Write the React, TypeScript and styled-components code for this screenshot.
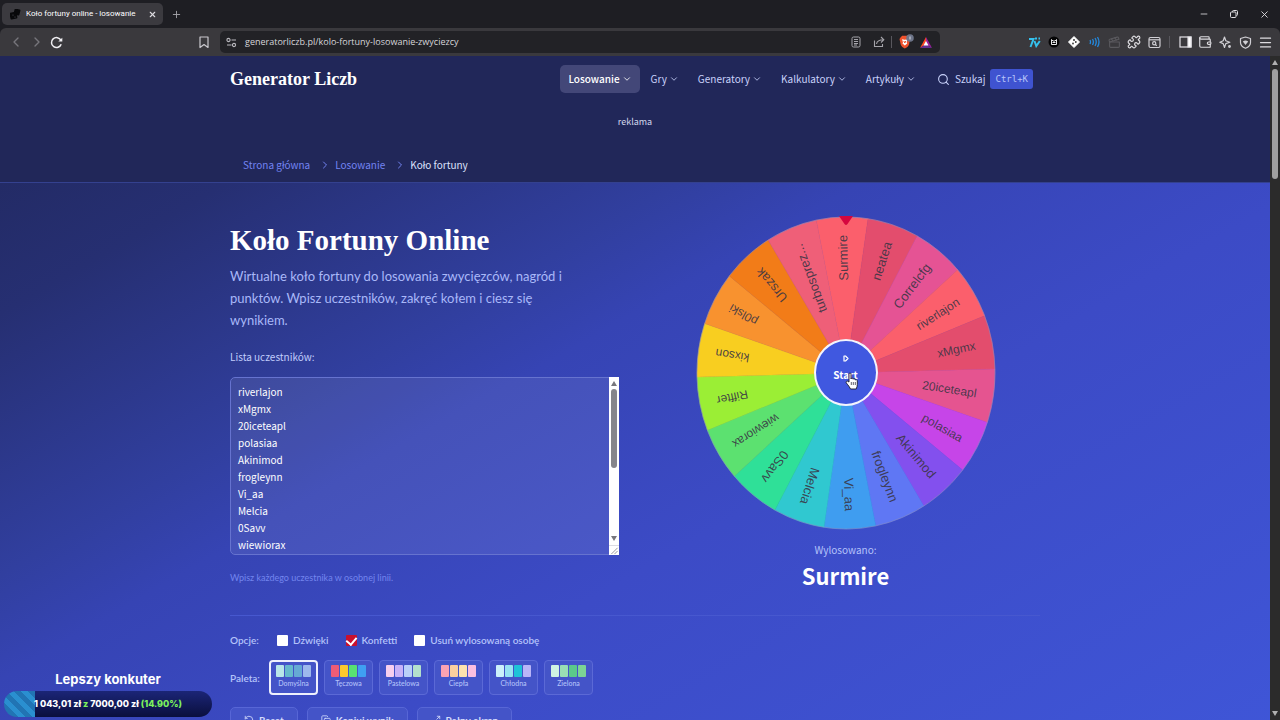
import React from "react";
import styled, { createGlobalStyle, css } from "styled-components";
import {
  ChevronDown,
  ChevronLeft,
  ChevronRight,
  Clapperboard,
  Copy,
  Maximize2,
  Menu,
  Minus,
  Plus,
  Puzzle,
  RotateCcw,
  Search,
  Wallet,
  X,
} from "lucide-react";

const sans = `"Noto Sans CJK SC", "Noto Sans", sans-serif`;
const polish = `Lato, "Noto Sans", sans-serif`;

const GlobalStyle = createGlobalStyle`
  * { box-sizing: border-box; }
  html, body { margin: 0; background: #1e1e23; }
  body { font-family: ${sans}; font-size: 10px; color: #fff; }
  button, input, textarea { font: inherit; color: inherit; margin: 0; }
  button { background: none; border: 0; padding: 0; cursor: pointer; }
  a { color: inherit; text-decoration: none; }
  h1, p, ol { margin: 0; padding: 0; }
  svg { display: block; flex: none; }
`;

const Window = styled.div`
  position: relative;
  display: flex;
  flex-direction: column;
  height: 100vh;
  overflow: hidden;
`;

/* Browser chrome */

const TabBar = styled.div`
  flex: none;
  height: 28px;
  display: flex;
  align-items: center;
  padding: 0 10px 0 2px;
  background: #1e1e23;
`;

const Tab = styled.div`
  width: 161px;
  height: 22px;
  display: flex;
  align-items: center;
  gap: 5px;
  padding: 0 6px 0 8px;
  border-radius: 5px;
  background: #3b3a3f;
  font-family: Roboto, sans-serif;
  font-size: 8px;
  line-height: 22px;
`;

const TabTitle = styled.span`
  flex: 1;
  min-width: 0;
  overflow: hidden;
  white-space: nowrap;
`;

const ChromeButton = styled.button<{ $dim?: boolean }>`
  display: flex;
  align-items: center;
  justify-content: center;
  color: ${(p) => (p.$dim ? "#77767c" : "#dddce0")};
`;

const NewTab = styled(ChromeButton)`
  margin-left: 8px;
  color: #a5a4aa;
`;

const WindowButtons = styled.div`
  display: flex;
  gap: 20px;
  margin-left: auto;
`;

const Toolbar = styled.div`
  flex: none;
  height: 28px;
  display: flex;
  align-items: center;
  padding: 0 5px 0 8px;
  background: #3a393d;
  border-top-left-radius: 6px;
  border-top-right-radius: 6px;
`;

const NavButtons = styled.div`
  display: flex;
  align-items: center;
  gap: 5px;
  width: 191px;
`;

const Address = styled.div`
  width: 720px;
  min-width: 0;
  height: 22px;
  margin-left: 11px;
  display: flex;
  align-items: center;
  gap: 6px;
  padding: 0 8px 0 6px;
  border-radius: 5px;
  background: #222226;
`;

const Url = styled.span`
  flex: 1;
  margin-left: 2px;
  font-family: "Open Sans", sans-serif;
  font-size: 9px;
  line-height: 22px;
  color: #d6d5da;
`;

const PageTools = styled.div`
  display: flex;
  gap: 12px;
`;

const Divider = styled.i`
  width: 1px;
  height: 12px;
  background: #58575d;
`;

const Extensions = styled.div`
  display: flex;
  align-items: center;
  margin-left: auto;
  ${ChromeButton} {
    width: 20px;
  }
  ${Divider} {
    margin: 0 5px;
  }
`;

/* Page */

const Viewport = styled.div`
  flex: 1;
  min-height: 0;
  display: flex;
`;

const Page = styled.div`
  flex: 1;
  min-width: 0;
  overflow: hidden;
  display: flex;
  flex-direction: column;
`;

const ScrollTrack = styled.div`
  width: 10px;
  display: flex;
  flex-direction: column;
  align-items: center;
  padding: 4px 0;
  background: #2b2b2b;
`;

const ScrollThumb = styled.i`
  width: 6px;
  height: 110px;
  margin: 4px 0 auto;
  border-radius: 3px;
  background: #9f9f9f;
`;

const Container = styled.div`
  width: 100%;
  max-width: 810px;
  margin: 0 auto;
`;

const Header = styled.header`
  flex: none;
  background: #212759;
  border-bottom: 1px solid #34418f;
`;

const TopRow = styled(Container)`
  display: flex;
  align-items: center;
  padding: 9px 7px 0 0;
`;

const Brand = styled.a`
  margin-right: auto;
  font-family: "Liberation Serif", serif;
  font-weight: 700;
  font-size: 18px;
  line-height: 28px;
`;

const Nav = styled.nav`
  display: flex;
  gap: 3px;
`;

const NavItem = styled.button<{ $active?: boolean }>`
  display: flex;
  align-items: center;
  gap: 2px;
  height: 28px;
  padding: 0 8px;
  border-radius: 5px;
  line-height: 16px;
  color: #c9d2fb;
  ${(p) =>
    p.$active &&
    css`
      background: #434778;
      color: #fff;
      font-weight: 500;
    `}
`;

const SearchButton = styled(NavItem)`
  gap: 5px;
  padding: 0;
  margin-left: 13px;
`;

const Kbd = styled.kbd`
  padding: 0 5px;
  border-radius: 3px;
  background: #3f53d0;
  font-family: "DejaVu Sans Mono", monospace;
  font-size: 9px;
  line-height: 20px;
  color: #b8c5fa;
`;

const Advert = styled(Container)`
  padding: 20px 0 26px;
  text-align: center;
  font-size: 9px;
  line-height: 18px;
  color: #d3d8ee;
`;

const Crumbs = styled.ol`
  max-width: 810px;
  height: 25px;
  margin: 0 auto;
  padding: 0 13px;
  display: flex;
  align-items: flex-start;
  list-style: none;
  line-height: 16px;
  color: #7384f2;
`;

const Crumb = styled.li<{ $current?: boolean }>`
  display: flex;
  align-items: center;
  gap: 4px;
  margin-right: 9px;
  ${(p) =>
    p.$current &&
    css`
      color: #dbe1fc;
    `}
`;

const Hero = styled.main`
  flex: 1 0 auto;
  padding-top: 33px;
  background: linear-gradient(
    150deg,
    #232b66 0%,
    #262f72 10%,
    #313f9f 30%,
    #3644b4 38%,
    #3c4bc6 58%,
    #3f56d8 100%
  );
`;

const Columns = styled(Container)`
  display: grid;
  grid-template-columns: 1fr 1fr;
  gap: 32px;
  min-height: 399px;
`;

const Column = styled.div`
  display: flex;
  flex-direction: column;
`;

const Title = styled.h1`
  margin-top: 6px;
  font-family: "Liberation Serif", serif;
  font-weight: 700;
  font-size: 29px;
  line-height: 36px;
`;

const Lead = styled.p`
  max-width: 350px;
  margin-top: 7px;
  font-family: ${polish};
  font-size: 13px;
  line-height: 22px;
  color: #a9b8f9;
`;

const FieldLabel = styled.label`
  margin-top: 18px;
  line-height: 16px;
  color: #c0ccfb;
`;

const ListBox = styled.div`
  position: relative;
  height: 178px;
  margin-top: 12px;
`;

const NameList = styled.textarea`
  display: block;
  width: 100%;
  height: 100%;
  padding: 5px 16px 5px 7px;
  border: 1px solid #6673cf;
  border-radius: 5px;
  background: rgba(255, 255, 255, 0.08);
  outline: none;
  resize: none;
  line-height: 17px;
  overflow-y: scroll;
  scrollbar-width: none;
`;

const ListScroll = styled.div`
  position: absolute;
  top: 0;
  right: 0;
  bottom: 0;
  width: 10px;
  display: flex;
  flex-direction: column;
  align-items: center;
  padding-top: 4px;
  background: #fff;
  pointer-events: none;
`;

const ListThumb = styled.i`
  width: 6px;
  height: 79px;
  margin: 3px 0 auto;
  border-radius: 3px;
  background: #85858b;
`;

const Grip = styled.svg`
  margin-top: 4px;
  border-top: 1px solid #dcdce4;
`;

const Hint = styled.p`
  margin-top: 15px;
  font-family: ${polish};
  font-size: 9px;
  line-height: 16px;
  color: #7385ee;
`;

const WheelBox = styled.div`
  position: relative;
  width: 300px;
  height: 314px;
  margin: 0 auto;
`;

const StartButton = styled.button`
  position: absolute;
  inset: 123px 118px 124px;
  display: flex;
  flex-direction: column;
  align-items: center;
  padding-top: 14px;
  border: 2px solid #f3f4fd;
  border-radius: 50%;
  background: #4058e0;
  font-weight: 700;
  line-height: 16px;
  gap: 5px;
`;

const Cursor = styled.svg`
  position: absolute;
  left: 149px;
  top: 156px;
`;

const ResultLabel = styled.p`
  margin-top: 12px;
  text-align: center;
  line-height: 16px;
  color: #b4c2fa;
`;

const Result = styled.output`
  text-align: center;
  font-weight: 700;
  font-size: 22px;
  line-height: 34px;
`;

const Settings = styled(Container)`
  border-top: 1px solid #4758cf;
  padding: 16px 0 24px;
  font-family: ${polish};
  font-weight: 600;
  line-height: 16px;
  color: #b4c2fa;
`;

const OptionRow = styled.div`
  display: flex;
  align-items: center;
`;

const OptionLabel = styled.span`
  width: 30px;
`;

const Check = styled.label`
  display: flex;
  align-items: center;
  gap: 5px;
  margin-left: 17px;
`;

const Box = styled.input`
  appearance: none;
  width: 11px;
  height: 11px;
  border-radius: 1px;
  background: #fff;
  display: grid;
  place-items: center;
  &:checked { background: #c8102e; }
  &:checked::before {
    content: "";
    width: 5px;
    height: 8px;
    margin-bottom: 2px;
    border: solid #fff;
    border-width: 0 2px 2px 0;
    transform: rotate(40deg);
  }
`;

const PaletteRow = styled(OptionRow)`
  gap: 6px;
  margin-top: 12px;
`;

const PaletteLabel = styled.span`
  width: 33px;
`;

const PaletteButton = styled.button<{ $selected?: boolean }>`
  width: 49px;
  height: 35px;
  padding-bottom: 2px;
  display: flex;
  flex-direction: column;
  align-items: center;
  justify-content: center;
  gap: 1px;
  border: ${(p) => (p.$selected ? "2px solid #eef0fd" : "1px solid #5b69d6")};
  border-radius: 4px;
  background: #4454c8;
  font-size: 7px;
  font-weight: 500;
  line-height: 10px;
`;

const Swatches = styled.span`
  display: flex;
  gap: 1px;
`;

const Swatch = styled.i<{ $color: string }>`
  width: 8px;
  height: 12px;
  border-radius: 1px;
  background: ${(p) => p.$color};
`;

const Actions = styled.div`
  display: flex;
  gap: 9px;
  margin-top: 12px;
`;

const ActionButton = styled.button`
  display: flex;
  align-items: center;
  gap: 5px;
  height: 26px;
  padding: 0 13px;
  border: 1px solid #5766d6;
  border-radius: 5px;
  background: #4454c8;
  font-weight: 700;
  color: #d5dcfc;
`;

/* Stream overlay with the donation goal */

const Goal = styled.aside`
  position: absolute;
  left: 4px;
  bottom: 3px;
  width: 208px;
  font-family: Inter, sans-serif;
  font-weight: 800;
  text-align: center;
`;

const GoalTitle = styled.p`
  margin-bottom: 3px;
  font-weight: 700;
  font-size: 13px;
  line-height: 18px;
`;

const GoalBar = styled.div`
  height: 26px;
  border-radius: 13px;
  overflow: hidden;
  background:
    repeating-linear-gradient(45deg, #2a8fd0 0 5px, #2174b4 5px 10px) no-repeat left / 31px 100%,
    linear-gradient(#1b2577, #0a0f3d);
  font-size: 9px;
  line-height: 25px;
`;

const Green = styled.span`
  color: #7df25c;
`;

const names = [
  ["Surmire", "#fb5f6c"],
  ["neatea", "#e34d6d"],
  ["Correlcfg", "#e55394"],
  ["riverlajon", "#fb5f6c"],
  ["xMgmx", "#e34d6d"],
  ["20iceteapl", "#e55490"],
  ["polasiaa", "#c645e8"],
  ["Akinimod", "#8350ee"],
  ["frogleynn", "#5f77f4"],
  ["Vi_aa", "#3f9df0"],
  ["Melcia", "#30c8d0"],
  ["0Savv", "#2fe098"],
  ["wiewiorax", "#5ce170"],
  ["Riffter", "#9bee35"],
  ["kixson", "#f8ce20"],
  ["p0lski", "#f8922f"],
  ["Urszak", "#f27c18"],
  ["turbosprez...", "#ef5f78"],
];

const entrants = [...names.slice(3), ...names.slice(0, 3)].map(([name]) => name).join("\n");

const CX = 150;
const CY = 157;
const RX = 149;
const RY = 156;
const SLICE = 20;
const START = -1.5;

function onWheel(deg: number, scale: number) {
  const a = (deg * Math.PI) / 180;
  return [CX + Math.sin(a) * RX * scale, CY - Math.cos(a) * RY * scale];
}

function Wheel() {
  return (
    <svg width="300" height="314" viewBox="0 0 300 314" role="img" aria-label="Koło fortuny">
      {names.map(([name, color], i) => {
        const mid = i * SLICE + START;
        const [x1, y1] = onWheel(mid - SLICE / 2, 1);
        const [x2, y2] = onWheel(mid + SLICE / 2, 1);
        return (
          <path
            key={name}
            fill={color}
            stroke={color}
            strokeWidth="0.400"
            d={`M${CX} ${CY}L${x1} ${y1}A${RX} ${RY} 0 0 1 ${x2} ${y2}Z`}
          />
        );
      })}
      <ellipse cx={CX} cy={CY} rx={RX} ry={RY} fill="none" stroke="#8f93c0" strokeOpacity="0.5" />
      {names.map(([name], i) => {
        const [x, y] = onWheel(i * SLICE + START, 0.885);
        const angle = (Math.atan2(y - CY, x - CX) * 180) / Math.PI;
        const steep = Math.abs(y - CY) > Math.abs(x - CX);
        return (
          <text
            key={name}
            x={x}
            y={y}
            transform={`rotate(${angle} ${x} ${y})`}
            textAnchor="end"
            dominantBaseline="central"
            fontFamily="Liberation Sans, sans-serif"
            fontSize={steep ? 13 : 12}
            fill="#3a3545"
            fillOpacity="0.9"
          >
            {name}
          </text>
        );
      })}
      <path d="M143 0H157L151.500 8Q150 10 148.500 8Z" fill="#d6063f" />
    </svg>
  );
}

const palettes: [string, string[]][] = [
  ["Domyślna", ["#b8e6e8", "#66b9cc", "#66a9d4", "#9db8ec"]],
  ["Tęczowa", ["#ee5c76", "#fcc82d", "#58e272", "#3f9ff2"]],
  ["Pastelowa", ["#f7cfee", "#c7b2f8", "#b9cff8", "#b3e0cc"]],
  ["Ciepła", ["#fba3b2", "#fbcf9f", "#fde2ae", "#fbbfe0"]],
  ["Chłodna", ["#ccf1fa", "#97e3f2", "#1ec3d8", "#b9b5f8"]],
  ["Zielona", ["#cff4e2", "#99deb4", "#5bc98a", "#7cd495"]],
];

function Dice() {
  return (
    <svg width="11" height="11" viewBox="0 0 11 11" fill="#08080a">
      <rect x="4" y="0" width="6" height="6" rx="1" transform="rotate(15 7 3)" />
      <rect x="0" y="3" width="7" height="7" rx="1" transform="rotate(-12 4 7)" />
      <circle cx="3" cy="6" r="0.600" fill="#55555a" />
      <circle cx="5" cy="8" r="0.600" fill="#55555a" />
    </svg>
  );
}

function ReloadIcon() {
  return (
    <svg width="13" height="13" viewBox="0 0 13 13" fill="none" stroke="#f0eff3" strokeWidth="1.500">
      <path d="M11.200 8.300A5 5 0 1 1 10.900 4.200" />
      <path d="M8.300 5.600H12.300V1.800Z" fill="#f0eff3" stroke="none" />
    </svg>
  );
}

function SiteInfo() {
  return (
    <svg width="11" height="11" viewBox="0 0 11 11" fill="none" stroke="#b9b8be" strokeWidth="1.100">
      <circle cx="2.500" cy="3" r="1.600" />
      <path d="M5.500 3H10M1 8H5.500" />
      <circle cx="8" cy="8" r="1.600" />
    </svg>
  );
}

function ReaderIcon() {
  return (
    <svg width="10" height="12" viewBox="0 0 10 12" fill="none" stroke="#a5a4aa">
      <rect x="1" y="1" width="8" height="10" rx="1.500" />
      <path d="M3 3.500H7M3 5.500H7M3 7.500H7M3 9H6" />
    </svg>
  );
}

function ShareArrow() {
  return (
    <svg width="12" height="12" viewBox="0 0 12 12" fill="none" stroke="#a5a4aa" strokeWidth="1.100">
      <path d="M1.500 4.500V10.500H9.500V8" />
      <path d="M3.500 8C4 5 6 3.800 10.500 3.800M8 1L10.800 3.800L8 6.500" />
    </svg>
  );
}

function BraveShield() {
  return (
    <svg width="16" height="16" viewBox="0 0 16 16">
      <path d="M2.500 3.500L4.200 1.800H9.200L11 3.500L12 5L11 10.500C10.500 12.500 8.500 13.500 6.800 14.600C5.200 13.500 3.200 12.500 2.700 10.500L1.500 5Z" fill="#f0522c" />
      <path d="M4 5.200L6.800 5.800L9.600 5.200L8.700 8.300L9.200 9.600L6.800 11.600L4.500 9.600L5 8.300Z" fill="#fff" />
      <path d="M5.800 7L6.800 9L7.800 7" fill="none" stroke="#f0522c" />
      <circle cx="12" cy="4" r="3.800" fill="#6d7488" />
      <path d="M12 2.500V5.500" stroke="#d9dce6" />
    </svg>
  );
}

function BatTriangle() {
  return (
    <svg width="12" height="11" viewBox="0 0 12 11">
      <path d="M6 0L0 11L6 7Z" fill="#ff4724" />
      <path d="M6 0L12 11L6 7Z" fill="#9e1f9a" />
      <path d="M0 11H12L6 7Z" fill="#662d91" />
      <path d="M6 4L3.500 8.500H8.500Z" fill="#fff" />
    </svg>
  );
}

function SevenTv() {
  return (
    <svg width="13" height="11" viewBox="0 0 13 11" fill="none" stroke="#35c1ec" strokeWidth="2">
      <path d="M1 2H5.500L2.500 10" />
      <path d="M6.500 4L8.300 9L11.800 4M7 1.500H9M10.500 1.500H12" />
    </svg>
  );
}

function CatBadge() {
  return (
    <svg width="12" height="12" viewBox="0 0 12 12">
      <circle cx="6" cy="6" r="5.500" fill="#050506" />
      <path d="M3.500 8.500V3.500L5 5H7L8.500 3.500V8.500Z" fill="none" stroke="#e8e8ea" />
      <path d="M4.500 6.500H7.500" stroke="#e8e8ea" />
    </svg>
  );
}

function DiamondIcon() {
  return (
    <svg width="12" height="12" viewBox="0 0 12 12">
      <path d="M6 0.500L11.500 6L6 11.500L0.500 6Z" fill="#fff" stroke="#fff" strokeLinejoin="round" />
      <circle cx="6" cy="4" r="1" fill="#333" />
      <circle cx="7.800" cy="6" r="0.900" fill="#333" />
      <circle cx="5" cy="7.500" r="0.900" fill="#333" />
    </svg>
  );
}

function SoundWaves() {
  return (
    <svg width="12" height="12" viewBox="0 0 12 12" fill="none" stroke="#2388dd" strokeWidth="1.300">
      <path d="M2 4Q3 6 2 8M4.500 3Q6.300 6 4.500 9M7 2Q9.500 6 7 10M9.500 1Q12.500 6 9.500 11" />
    </svg>
  );
}

function TabSearch() {
  return (
    <svg width="13" height="13" viewBox="0 0 13 13" fill="none" stroke="#d0cfd4" strokeWidth="1.200">
      <rect x="1" y="1.500" width="11" height="10" rx="1.500" />
      <path d="M1 3.800H12" />
      <circle cx="6.200" cy="7.300" r="1.600" />
      <path d="M7.400 8.500L8.800 9.800" />
    </svg>
  );
}

function SparkIcon() {
  return (
    <svg width="13" height="13" viewBox="0 0 13 13" fill="none" stroke="#d0cfd4" strokeWidth="1.200" strokeLinejoin="round">
      <path d="M5.500 1L6.800 4.800L10.800 6.200L6.800 7.600L5.500 11.500L4.200 7.600L0.800 6.200L4.200 4.800Z" />
      <circle cx="10.500" cy="10.500" r="1.400" fill="#d0cfd4" stroke="none" />
    </svg>
  );
}

function VpnShield() {
  return (
    <svg width="13" height="13" viewBox="0 0 13 13" fill="none" stroke="#d0cfd4" strokeWidth="1.200" strokeLinejoin="round">
      <path d="M6.500 1L11.500 2.500V6.500C11.500 9.500 9 11.300 6.500 12.300C4 11.300 1.500 9.500 1.500 6.500V2.500Z" />
      <path d="M3.800 5.500Q6.500 3.500 9.200 5.500L6.500 9Z" fill="#d0cfd4" stroke="none" />
    </svg>
  );
}

function SidePanel() {
  return (
    <svg width="13" height="12" viewBox="0 0 13 12" fill="none" stroke="#e4e3e8" strokeWidth="1.200">
      <rect x="1" y="1" width="11" height="10" />
      <path d="M9 1H12V11H9Z" fill="#fff" />
    </svg>
  );
}

function ArrowUp({ fill }: { fill: string }) {
  return (
    <svg width="6" height="5" viewBox="0 0 6 5" fill={fill}>
      <path d="M0 5L3 0L6 5Z" />
    </svg>
  );
}

function ArrowDown({ fill }: { fill: string }) {
  return (
    <svg width="6" height="5" viewBox="0 0 6 5" fill={fill}>
      <path d="M0 0L3 5L6 0Z" />
    </svg>
  );
}

export default function App() {
  return (
    <Window>
      <GlobalStyle />
      <TabBar>
        <Tab>
          <Dice />
          <TabTitle>Koło fortuny online - losowanie</TabTitle>
          <ChromeButton aria-label="Zamknij kartę"><X size={9} strokeWidth={3} /></ChromeButton>
        </Tab>
        <NewTab aria-label="Nowa karta"><Plus size={11} /></NewTab>
        <WindowButtons>
          <ChromeButton aria-label="Minimalizuj"><Minus size={10} /></ChromeButton>
          <ChromeButton aria-label="Przywróć">
            <svg width="10" height="10" viewBox="0 0 10 10" fill="none" stroke="currentColor">
              <rect x="1.500" y="3" width="5.500" height="5.500" rx="1" />
              <path d="M3.500 3V2.500Q3.500 1.500 4.500 1.500H7.500Q8.500 1.500 8.500 2.500V5.500Q8.500 6.500 7.500 6.500" />
            </svg>
          </ChromeButton>
          <ChromeButton aria-label="Zamknij"><X size={11} /></ChromeButton>
        </WindowButtons>
      </TabBar>
      <Toolbar>
        <NavButtons>
          <ChromeButton $dim aria-label="Wstecz"><ChevronLeft size={16} strokeWidth={2} /></ChromeButton>
          <ChromeButton $dim aria-label="Dalej"><ChevronRight size={16} strokeWidth={2} /></ChromeButton>
          <ChromeButton aria-label="Odśwież"><ReloadIcon /></ChromeButton>
        </NavButtons>
        <ChromeButton aria-label="Dodaj zakładkę">
          <svg width="10" height="13" viewBox="0 0 10 13" fill="none" stroke="#c9c8ce" strokeWidth="1.200">
            <path d="M1 1H9V11.500L5 8.500L1 11.500Z" strokeLinejoin="round" />
          </svg>
        </ChromeButton>
        <Address>
          <SiteInfo />
          <Url>generatorliczb.pl/kolo-fortuny-losowanie-zwyciezcy</Url>
          <PageTools>
            <ReaderIcon />
            <ShareArrow />
          </PageTools>
          <Divider />
          <BraveShield />
          <BatTriangle />
        </Address>
        <Extensions>
          <ChromeButton aria-label="7TV"><SevenTv /></ChromeButton>
          <ChromeButton aria-label="Kot"><CatBadge /></ChromeButton>
          <ChromeButton aria-label="Kości"><DiamondIcon /></ChromeButton>
          <ChromeButton aria-label="Dźwięk"><SoundWaves /></ChromeButton>
          <ChromeButton aria-label="Wideo"><Clapperboard size={13} color="#5a595e" /></ChromeButton>
          <ChromeButton aria-label="Rozszerzenia"><Puzzle size={14} /></ChromeButton>
          <ChromeButton aria-label="Szukaj kart"><TabSearch /></ChromeButton>
          <Divider />
          <ChromeButton aria-label="Panel boczny"><SidePanel /></ChromeButton>
          <ChromeButton aria-label="Portfel"><Wallet size={14} /></ChromeButton>
          <ChromeButton aria-label="Asystent"><SparkIcon /></ChromeButton>
          <ChromeButton aria-label="VPN"><VpnShield /></ChromeButton>
          <ChromeButton aria-label="Menu"><Menu size={15} /></ChromeButton>
        </Extensions>
      </Toolbar>

      <Viewport>
        <Page>
          <Header>
            <TopRow>
              <Brand href="#">Generator Liczb</Brand>
              <Nav>
                <NavItem $active>Losowanie <ChevronDown size={10} /></NavItem>
                <NavItem>Gry <ChevronDown size={10} /></NavItem>
                <NavItem>Generatory <ChevronDown size={10} /></NavItem>
                <NavItem>Kalkulatory <ChevronDown size={10} /></NavItem>
                <NavItem>Artykuły <ChevronDown size={10} /></NavItem>
              </Nav>
              <SearchButton>
                <Search size={13} />
                Szukaj
                <Kbd>Ctrl+K</Kbd>
              </SearchButton>
            </TopRow>
            <Advert>reklama</Advert>
            <Crumbs>
              <Crumb><a href="#">Strona główna</a></Crumb>
              <Crumb><ChevronRight size={12} /><a href="#">Losowanie</a></Crumb>
              <Crumb $current><ChevronRight size={12} color="#7384f2" />Koło fortuny</Crumb>
            </Crumbs>
          </Header>

          <Hero>
            <Columns>
              <Column>
                <Title>Koło Fortuny Online</Title>
                <Lead>
                  Wirtualne koło fortuny do losowania zwycięzców, nagród i punktów. Wpisz uczestników, zakręć kołem i
                  ciesz się wynikiem.
                </Lead>
                <FieldLabel htmlFor="names">Lista uczestników:</FieldLabel>
                <ListBox>
                  <NameList id="names" defaultValue={entrants} spellCheck={false} />
                  <ListScroll>
                    <ArrowUp fill="#77777d" />
                    <ListThumb />
                    <ArrowDown fill="#77777d" />
                    <Grip width="10" height="10" viewBox="0 0 10 10" stroke="#8d8d95">
                      <path d="M2 9L9 2M5.500 9L9 5.500" />
                    </Grip>
                  </ListScroll>
                </ListBox>
                <Hint>Wpisz każdego uczestnika w osobnej linii.</Hint>
              </Column>
              <Column>
                <WheelBox>
                  <Wheel />
                  <StartButton>
                    <svg width="6" height="7" viewBox="0 0 6 7" fill="none" stroke="#fff" strokeWidth="1.200">
                      <path d="M1 1H2.500L5 3.500L2.500 6H1Z" strokeLinejoin="round" />
                    </svg>
                    Start
                  </StartButton>
                  <Cursor width="14" height="18" viewBox="0 0 14 18">
                    <path
                      d="M4 10V2.200Q4 1 5 1T6 2.200V7Q6.200 6 7 6T8.200 7.200Q8.500 6.500 9.300 6.700T10.300 8Q11 7.300 11.700 7.800T12.300 9V12.500Q12.300 14.500 11.200 17H5.500Q4.500 14.800 2.800 12.800L1.200 10.800Q0.800 9.800 1.600 9.300T3 9.500Z"
                      fill="#fff"
                      stroke="#1c1c2b"
                      strokeWidth="0.900"
                    />
                    <path d="M6.300 10V13M8.300 10V13M10.300 10V13" stroke="#1c1c2b" strokeWidth="0.700" />
                  </Cursor>
                </WheelBox>
                <ResultLabel>Wylosowano:</ResultLabel>
                <Result>Surmire</Result>
              </Column>
            </Columns>

            <Settings>
              <OptionRow>
                <OptionLabel>Opcje:</OptionLabel>
                <Check><Box type="checkbox" />Dźwięki</Check>
                <Check><Box type="checkbox" defaultChecked />Konfetti</Check>
                <Check><Box type="checkbox" />Usuń wylosowaną osobę</Check>
              </OptionRow>
              <PaletteRow>
                <PaletteLabel>Paleta:</PaletteLabel>
                {palettes.map(([label, colors], i) => (
                  <PaletteButton key={label} $selected={i === 0}>
                    <Swatches>
                      {colors.map((c) => (
                        <Swatch key={c} $color={c} />
                      ))}
                    </Swatches>
                    {label}
                  </PaletteButton>
                ))}
              </PaletteRow>
              <Actions>
                <ActionButton><RotateCcw size={10} />Reset</ActionButton>
                <ActionButton><Copy size={10} />Kopiuj wynik</ActionButton>
                <ActionButton><Maximize2 size={10} />Pełny ekran</ActionButton>
              </Actions>
            </Settings>
          </Hero>
        </Page>
        <ScrollTrack>
          <ArrowUp fill="#b0b0b0" />
          <ScrollThumb />
          <ArrowDown fill="#b0b0b0" />
        </ScrollTrack>
      </Viewport>

      <Goal>
        <GoalTitle>Lepszy konkuter</GoalTitle>
        <GoalBar>
          1 043,01 zł <Green>z</Green> 7000,00 zł <Green>(14.90%)</Green>
        </GoalBar>
      </Goal>
    </Window>
  );
}
